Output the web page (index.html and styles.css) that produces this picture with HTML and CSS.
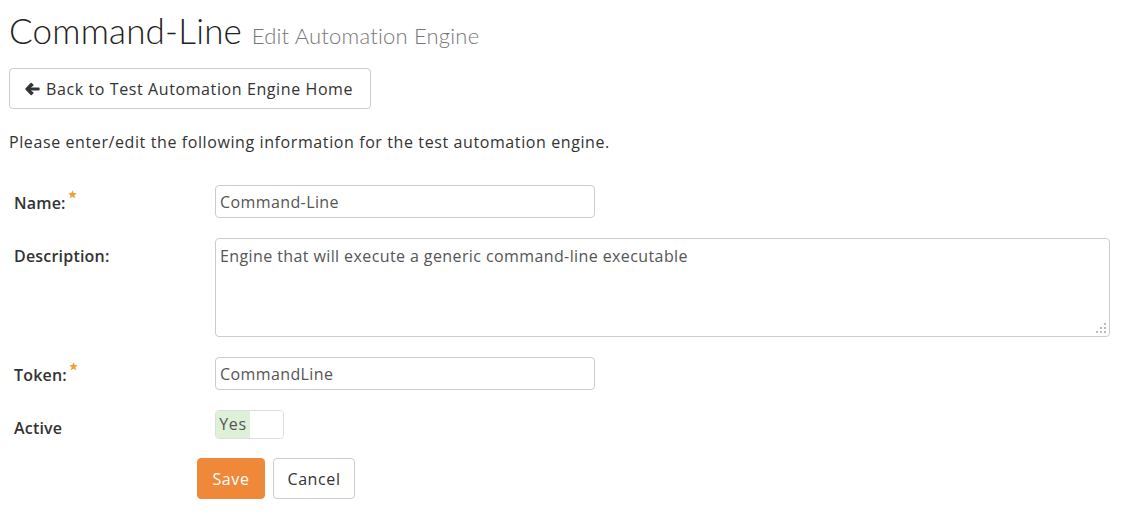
FILE: index.html
```html
<!DOCTYPE html>
<html>
<head>
<meta charset="utf-8">
<link rel="stylesheet" href="styles.css">
</head>
<body>
<div class="page">
  <h1 class="title">Command-Line <small class="subtitle">Edit Automation Engine</small></h1>
  <a class="btn btn-back" href="#">
    <svg class="arrow" viewBox="0 0 16 14" width="15" height="14"><path d="M7.2 0.6 L8.9 2.3 Q9.4 2.9 8.9 3.5 L6.2 5.4 L14.6 5.4 Q15.6 5.4 15.6 6.4 L15.6 7.6 Q15.6 8.6 14.6 8.6 L6.2 8.6 L8.9 10.5 Q9.4 11.1 8.9 11.7 L7.2 13.4 Q6.6 13.9 6 13.4 L0.6 7.8 Q0 7 0.6 6.2 L6 0.6 Q6.6 0.1 7.2 0.6 Z" fill="#333"/></svg>
    Back to Test Automation Engine Home
  </a>
  <p class="intro">Please enter/edit the following information for the test automation engine.</p>
  <form class="form">
    <div class="row">
      <label class="label">Name:<svg class="req" viewBox="0 0 10 10" width="9" height="9"><path d="M5 0.3 L6.3 3.4 L9.7 3.7 L7.1 5.9 L7.9 9.3 L5 7.5 L2.1 9.3 L2.9 5.9 L0.3 3.7 L3.7 3.4 Z" fill="#f0a035"/></svg></label>
      <input class="input short" type="text" value="Command-Line">
    </div>
    <div class="row">
      <label class="label">Description:</label>
      <div class="area-wrap">
        <textarea class="input area">Engine that will execute a generic command-line executable</textarea>
      </div>
    </div>
    <div class="row">
      <label class="label">Token:<svg class="req" viewBox="0 0 10 10" width="9" height="9"><path d="M5 0.3 L6.3 3.4 L9.7 3.7 L7.1 5.9 L7.9 9.3 L5 7.5 L2.1 9.3 L2.9 5.9 L0.3 3.7 L3.7 3.4 Z" fill="#f0a035"/></svg></label>
      <input class="input short" type="text" value="CommandLine">
    </div>
    <div class="row">
      <label class="label">Active</label>
      <div class="toggle"><span class="toggle-on">Yes</span><span class="toggle-off"></span></div>
    </div>
    <div class="actions">
      <button class="btn btn-save" type="button">Save</button>
      <button class="btn btn-cancel" type="button">Cancel</button>
    </div>
  </form>
</div>
</body>
</html>
```

FILE: styles.css
```css
html, body {
  margin: 0;
  padding: 0;
  background: #fff;
}
body {
  font-family: "Open Sans", "DejaVu Sans", sans-serif;
  font-size: 16px;
  letter-spacing: 0.6px;
  color: #333;
}
.page {
  padding: 0 9px;
}
.title {
  margin: 0;
  padding-top: 10px;
  height: 58px;
  font-family: "Lato", sans-serif;
  font-weight: 300;
  font-size: 35px;
  line-height: 40px;
  color: #222;
  letter-spacing: 0.2px;
}
.subtitle {
  font-size: 22px;
  color: #777;
  font-weight: 300;
}
.btn {
  display: inline-flex;
  align-items: center;
  justify-content: center;
  box-sizing: border-box;
  height: 41px;
  border: 1px solid #ccc;
  border-radius: 4px;
  background: #fff;
  color: #333;
  font-family: inherit;
  font-size: 16px;
  letter-spacing: 0.6px;
  text-decoration: none;
  cursor: pointer;
}
.btn-back {
  width: 362px;
  gap: 6px;
  justify-content: flex-start;
  padding-left: 15px;
}
.arrow {
  display: block;
}
.intro {
  margin: 22px 0 0;
  line-height: 22px;
}
.form {
  margin-top: 32px;
}
.row {
  display: grid;
  grid-template-columns: 206px 1fr;
  align-items: start;
  margin-bottom: 20px;
}
.label {
  padding: 8px 0 0 5px;
  line-height: 20px;
  font-weight: 600;
  letter-spacing: 0.2px;
  color: #333;
}
.req {
  vertical-align: top;
  margin-left: 2px;
  margin-top: -3px;
}
.input {
  box-sizing: border-box;
  border: 1px solid #ccc;
  border-radius: 4px;
  font-family: inherit;
  font-size: 16px;
  letter-spacing: 0.4px;
  color: #555;
  padding: 0 4px;
  margin: 0;
  background: #fff;
}
.short {
  width: 380px;
  height: 33px;
}
.area-wrap {
  position: relative;
  width: 895px;
  height: 99px;
}
.area {
  display: block;
  width: 895px;
  height: 99px;
  padding-top: 7px;
  resize: none;
  line-height: 20px;
}
.area-wrap::after {
  content: "";
  position: absolute;
  right: 4px;
  bottom: 4px;
  width: 2px;
  height: 2px;
  background: #bbb;
  box-shadow: -4px 0 #bbb, -8px 0 #bbb, 0 -4px #bbb, -4px -4px #bbb, 0 -8px #bbb;
}
.toggle {
  display: flex;
  box-sizing: border-box;
  width: 69px;
  height: 29px;
  border: 1px solid #ddd;
  border-radius: 4px;
  overflow: hidden;
}
.toggle-on {
  width: 34px;
  background: #dff0d8;
  color: #555;
  line-height: 27px;
  text-align: center;
}
.toggle-off {
  flex: 1;
  background: #fff;
}
.actions {
  display: flex;
  gap: 8px;
  padding-left: 188px;
  margin-top: -1px;
}
.btn-save {
  width: 68px;
  background: #f0883a;
  border-color: #f0883a;
  color: #fff;
}
.btn-cancel {
  width: 82px;
}
```
